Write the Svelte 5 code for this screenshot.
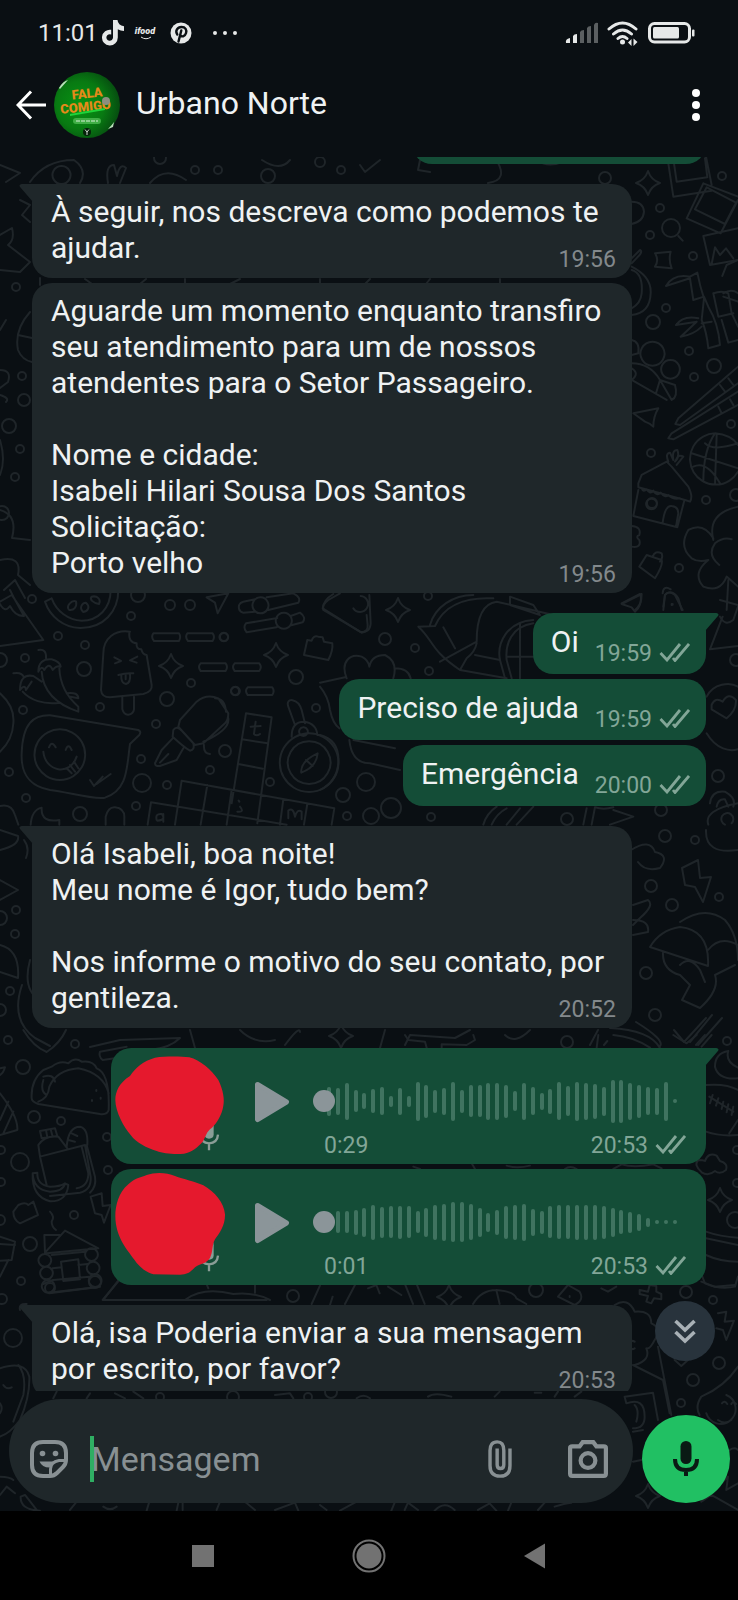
<script lang="ts">

type Message = {
    kind: 'text' | 'voice'
    out: boolean
    tail?: boolean
    text?: string
    time: string
    length?: string
    bars?: number[]
    cover?: string
}

let draft = $state('')

const groups: Message[][] = [
    [
        { kind: 'text', out: false, tail: true, time: '19:56', text: 'À seguir, nos descreva como podemos te ajudar.' },
        {
            kind: 'text', out: false, time: '19:56',
            text: 'Aguarde um momento enquanto transfiro seu atendimento para um de nossos atendentes para o Setor Passageiro.\n\nNome e cidade:\nIsabeli Hilari Sousa Dos Santos\nSolicitação:\nPorto velho'
        }
    ],
    [
        { kind: 'text', out: true, tail: true, time: '19:59', text: 'Oi' },
        { kind: 'text', out: true, time: '19:59', text: 'Preciso de ajuda' },
        { kind: 'text', out: true, time: '20:00', text: 'Emergência' }
    ],
    [
        {
            kind: 'text', out: false, tail: true, time: '20:52',
            text: 'Olá Isabeli, boa noite!\nMeu nome é Igor, tudo bem?\n\nNos informe o motivo do seu contato, por gentileza.'
        }
    ],
    [
        {
            kind: 'voice', out: true, tail: true, time: '20:53', length: '0:29',
            bars: [29, 27, 37, 22, 16, 24, 28, 11, 27, 11, 39, 33, 23, 27, 39, 23, 32, 32, 37, 37, 33, 20, 37, 28, 17, 25, 38, 30, 39, 37, 35, 29, 43, 43, 37, 33, 28, 27, 39, 4],
            cover: 'M46 195C46 170 58 143 90 123C106 98 130 78 165 68C195 64 240 64 268 67C300 75 335 105 355 135C370 165 374 195 370 212C366 240 350 264 336 278C318 290 318 305 308 320C295 335 275 352 252 356C225 359 190 356 170 348C140 338 110 325 92 300C72 278 46 230 46 195Z'
        },
        {
            kind: 'voice', out: true, time: '20:53', length: '0:01',
            bars: [18, 22, 22, 25, 29, 35, 31, 32, 33, 32, 22, 29, 35, 37, 40, 40, 36, 29, 19, 25, 33, 35, 37, 27, 23, 32, 34, 34, 35, 35, 35, 33, 29, 24, 21, 17, 9, 4, 4, 4],
            cover: 'M46 180C46 150 55 110 85 85C105 65 120 66 140 57C165 48 200 49 225 60C250 70 285 76 310 88C345 108 372 140 375 175C376 205 360 230 345 250C335 268 340 285 330 306C318 325 300 322 285 334C270 348 265 355 240 356L160 355C135 348 115 330 102 310C85 285 46 245 46 180Z'
        }
    ],
    [
        { kind: 'text', out: false, tail: true, time: '20:53', text: 'Olá, isa Poderia enviar a sua mensagem por escrito, por favor?' }
    ]
]

const dots = [
    [32, 599, 4], [131, 616, 4], [138, 595, 7], [170, 605, 5], [190, 605, 5], [58, 636, 4], [85, 645, 4], [25, 658, 4], [0, 660, 7],
    [84, 669, 7], [191, 683, 4], [167, 699, 7], [100, 707, 4], [23, 710, 4], [156, 724, 4], [296, 677, 7], [316, 708, 4],
    [225, 751, 6], [141, 759, 4], [142, 783, 9], [167, 785, 4], [210, 770, 4], [9, 772, 4], [26, 798, 4], [80, 814, 7], [136, 806, 4],
    [270, 782, 4], [343, 795, 7], [347, 816, 4], [366, 782, 9], [224, 637, 4], [235, 691, 4],
    [385, 639, 6], [415, 648, 4], [429, 671, 4], [428, 596, 4], [391, 808, 10], [371, 816, 8], [431, 817, 4], [567, 819, 6],
    [661, 810, 6], [718, 776, 6], [736, 660, 6],
    [660, 208, 4], [722, 176, 4], [650, 235, 4], [693, 256, 4], [666, 308, 4], [653, 322, 7], [689, 351, 4], [714, 366, 7], [694, 377, 4],
    [731, 424, 4], [651, 453, 4], [706, 500, 4], [736, 495, 6], [679, 568, 4], [652, 503, 5], [671, 228, 9],
    [16, 287, 4], [22, 376, 4], [24, 400, 6], [9, 426, 7], [20, 449, 4], [15, 477, 4], [2, 513, 7],
    [195, 170, 4], [218, 170, 4], [268, 176, 7], [341, 170, 4], [320, 162, 5], [605, 178, 6], [160, 158, 6],
    [665, 836, 6], [695, 840, 4], [651, 886, 6], [672, 905, 6], [719, 897, 4], [646, 973, 6], [655, 1015, 6], [727, 1041, 4], [567, 1042, 6],
    [16, 910, 4], [15, 934, 4], [10, 991, 4], [8, 1040, 4], [75, 1044, 4], [0, 918, 7], [0, 1010, 6],
    [23, 1067, 7], [34, 1117, 6], [61, 1121, 4], [20, 1162, 9], [107, 1137, 4], [108, 1170, 4], [74, 1215, 4], [30, 1244, 7],
    [21, 1281, 4], [0, 1220, 5], [1, 1150, 4], [1, 1182, 4], [737, 1150, 4], [737, 1183, 4], [735, 1220, 8],
    [13, 1338, 9], [2, 1299, 5], [293, 1296, 6], [160, 1397, 4], [233, 1397, 6], [308, 1397, 4], [331, 1392, 6],
    [686, 1292, 6], [713, 1300, 4], [719, 1363, 6], [693, 1380, 6], [681, 1403, 4], [536, 1290, 7], [50, 1288, 5], [95, 1282, 6]
]

const sparkles = [
    [171, 666, 12], [276, 655, 12], [398, 610, 12], [648, 183, 12], [720, 1200, 12], [449, 1297, 12], [648, 1496, 12], [341, 1036, 12]
]

// doodles that are drawn at three times their size and scaled down, with the corner where each sheet starts
const sheets = [
    { x: 0, y: 590, d: [
        'M0 35L35 15L130 150L0 168M30 0L40 20L72 78M0 42Q15 70 30 48Q45 78 70 78',
        'M135 35C150 80 190 112 240 114C310 115 355 65 355 0M155 25C170 65 205 90 245 92C295 92 332 55 332 0M135 35L155 25M208 60C195 50 215 30 228 34C232 50 222 62 208 60ZM250 66C235 52 248 38 258 38C272 50 264 64 250 66ZM297 42C278 38 268 28 275 20C292 16 304 28 297 42Z',
        'M460 130H537Q544 141 537 153H462Q452 141 460 130ZM562 130H638Q646 141 638 153H564Q554 141 562 130ZM602 220H677Q685 231 677 243H602Q592 231 602 220ZM704 220H778Q787 231 778 243H704Q694 231 704 220ZM743 292H817Q825 303 817 315H743Q733 303 743 292ZM672 128A13 13 0 1 1 671 128ZM707 290A13 13 0 1 1 706 290Z',
        'M390 125C345 118 310 145 310 190L303 300Q305 322 330 322L430 312Q458 305 455 285L440 195Q428 195 424 178Q408 178 410 160Q385 158 388 127M367 322V358Q372 375 385 374Q400 372 402 358V320M343 202L363 213L345 220M412 200L390 211L410 218M355 255Q378 248 400 250M364 254Q362 280 378 282Q393 278 390 252M377 252V268',
        'M620 22L685 10M620 22L645 38L653 70L684 12M718 60Q712 40 730 35L765 28M800 22L880 10Q905 22 895 38L805 60M765 65L730 68Q720 66 718 58M782 22A24 24 0 1 1 781 22ZM832 84L738 100Q728 112 740 127L830 112M872 78L900 68Q920 82 908 97L874 106M852 68A24 24 0 1 1 851 68Z',
        'M912 195L922 150L935 152Q940 135 955 140L968 142L972 155L997 160Q1000 180 985 210Z',
        'M970 60Q965 45 985 30L1020 10M970 60L1085 128Q1105 125 1103 105L1100 75',
        'M115 180Q140 175 138 205M115 245Q115 205 155 208Q180 215 182 230M115 245Q125 225 133 240Q148 215 158 240Q170 225 182 230M178 235C180 280 200 320 235 350V365C190 350 130 320 125 245M40 250Q65 245 72 262M60 300Q60 250 100 258L125 275M60 300Q75 280 78 300L95 275M68 305C90 330 130 345 180 338M200 310Q235 305 235 325L212 320',
        'M65 490C68 400 100 375 150 376L415 420Q425 425 418 435L390 462C380 530 385 600 315 623C280 630 200 605 150 600C95 590 62 560 65 490ZM180 418A76 76 0 1 1 179 418ZM147 472Q155 450 167 472M197 480Q205 458 215 480M130 485C135 545 210 560 230 500M200 535L215 550M210 525L225 545M222 515L235 535M270 570L282 588L308 560M290 582L332 552',
        'M0 310Q45 350 40 400Q38 450 0 485',
        'M540 390L590 335Q620 310 655 325L685 370Q685 390 675 400L610 460L585 465L535 410ZM645 325Q675 325 678 365M685 385Q690 420 610 455M520 420Q530 405 545 422L580 460Q585 480 570 482Q550 470 518 440ZM518 445L485 480L465 520Q465 530 480 528L530 510L550 475M480 518L505 492M612 465Q610 490 630 492',
        'M738 370L815 382L772 700M738 370L695 640M726 448L803 460M715 522L788 536M545 572L1003 655L995 704M545 572L525 704M453 637L860 704M453 637L443 704M622 585L602 704M695 600L680 704M850 628L840 704M922 642L912 704M752 410L782 408M767 395L762 432Q770 440 780 432M718 635L716 632M720 650Q735 668 712 665M470 690Q465 670 485 672Q500 690 472 692M490 672V695M865 685V662Q880 650 885 680Q892 655 905 665V688',
        'M865 350C855 320 895 325 905 360L915 400M865 350L885 405M875 440Q875 395 912 395Q950 400 952 435M928 430A88 88 0 1 1 927 430ZM928 454A64 64 0 1 1 927 454ZM953 490Q950 530 904 548Q900 515 953 490ZM918 510L938 528M911 412A13 13 0 1 1 910 412Z',
        'M0 648Q35 640 45 675L55 704M92 704Q95 660 125 653Q122 700 178 690V704M317 704V680Q325 650 345 652Q375 655 373 685V704'
    ] },
    { x: 320, y: 590, d: [
        'M8 55Q10 30 40 12M8 55L120 125Q150 130 152 100L148 15M122 18A24 24 0 1 1 100 55',
        'M295 110C340 150 330 180 420 240L440 205Q465 185 470 160M295 110L345 108C370 50 430 20 520 25M330 105C345 50 400 15 460 15M370 112L405 175M360 215L470 155C470 80 490 40 530 35L700 75M420 240L560 265M465 195L540 210M570 20L640 45L660 75L570 45Z',
        'M640 90C560 95 530 160 540 210L555 265M640 100C575 110 555 160 560 210L575 265M560 200H640M600 100V265',
        'M80 265C60 215 90 190 125 200Q145 210 148 230Q155 195 195 195Q235 215 220 265M225 235Q265 235 272 265M0 278L75 262M0 290Q25 320 30 360Q38 400 58 415M88 450Q95 520 150 520L240 540M100 450L225 475M0 435Q60 450 55 520Q50 575 0 600',
        'M905 42L965 12Q965 50 945 65L935 52L905 42ZM1030 50L1035 15Q1045 0 1065 15L1088 60M1058 42V44M1208 80L1170 178L1254 168M1200 80Q1215 110 1240 90L1254 50M1200 30L1254 45',
        'M1160 320C1180 280 1230 275 1254 290M1160 430C1190 480 1230 485 1254 478M1175 345Q1185 320 1208 335Q1225 305 1248 330Q1250 360 1220 385L1175 358Z',
        'M490 704Q500 670 530 650M515 704Q530 670 560 655M560 704L600 655M590 704L640 650M790 704Q795 680 800 655M815 704L825 652Q850 660 880 652M870 704L940 680L880 660M1170 640Q1175 600 1215 605Q1250 625 1240 650M1190 650Q1195 625 1215 628L1225 650M1165 704Q1150 660 1254 640M1215 704A18 18 0 1 1 1235 700'
    ] },
    { x: 600, y: 150, d: [
        'M205 40L220 140L335 122M222 40L230 95L322 82L315 25M318 20L335 105M310 100L260 205L362 250L414 150M320 112L285 178L375 222L408 158L320 112M310 100L414 140M310 258L330 345L414 330M310 258L414 235M335 342L345 292L360 315L378 295L400 325',
        'M95 155Q130 155 132 185Q130 215 95 222M95 325L120 300Q130 305 112 322L95 340M95 360Q130 370 125 430Q122 460 95 475M95 350Q155 380 152 430Q150 490 95 495M235 258L248 272M165 310L212 305Q205 330 215 355L165 350Q178 330 165 310ZM367 378L380 345L414 330',
        'M198 408Q220 370 270 380L292 368Q300 410 312 445L305 510Q320 545 325 595L360 585Q355 520 325 470L312 440M198 408L270 385L280 450L312 440M228 525Q250 495 295 505M228 525L290 515M242 560L290 515M242 560Q280 555 305 530M305 520L335 515M340 430Q365 420 385 430L395 490L414 530M340 430L355 500L400 490M365 510L385 578L414 570M370 430Q395 415 414 430M370 440L414 455',
        'M95 570Q120 575 115 610L95 615M158 575A36 36 0 1 1 157 575ZM212 630A28 28 0 1 1 211 630ZM95 640Q150 640 180 690L215 750Q235 740 225 705L180 690M95 690L200 750M95 655Q120 670 95 690M180 690L168 730',
        'M100 790L175 775Q160 800 160 830Q150 820 135 815ZM226 822L240 825L414 700M226 822L235 805L414 650M205 865L220 868L414 765M205 865L215 850L414 725M360 705L375 725M385 685L400 705M355 770L365 790M390 748L400 765',
        'M345 850A77 77 0 1 0 414 965M345 850Q395 855 414 885M275 910L414 955M310 995Q310 900 345 850M315 880Q340 905 414 880M280 950Q320 930 360 1000M350 855L345 1002',
        'M115 1000L125 975L200 935L215 950L265 1010Q280 1040 270 1055L255 1050L115 1012ZM115 1020L100 1098L232 1132L252 1055M125 1015Q130 1028 140 1018Q150 1035 160 1022Q170 1040 182 1028Q195 1045 205 1035Q220 1050 240 1045M155 1046A16 16 0 1 1 154 1046ZM188 1118Q195 1065 215 1068Q235 1070 235 1090L228 1130M205 935Q195 910 210 908L220 930Q215 900 232 900Q240 920 225 935Q235 910 250 920L230 945',
        'M95 1128Q125 1130 118 1155Q105 1160 118 1170Q125 1195 95 1190M340 1170Q320 1090 414 1070M340 1165Q310 1115 265 1140Q235 1190 275 1225Q295 1238 325 1230M325 1230Q275 1270 310 1310Q360 1330 380 1280L414 1310M358 1245Q320 1215 345 1180Q370 1160 395 1168M118 1250L140 1215L185 1230Q190 1245 165 1285ZM158 1220Q165 1200 185 1210Q190 1225 180 1235M65 1360L120 1332Q130 1360 105 1380M190 1380L195 1335Q215 1315 235 1345L245 1380M188 1330Q190 1305 212 1318M215 1362V1365M385 1290L380 1380'
    ] },
    { x: 0, y: 1030, d: [
        'M70 0Q100 50 140 66Q180 40 198 0M300 65L380 50M300 65Q295 80 308 90L390 78',
        'M95 205Q92 150 130 120L155 110Q180 90 205 100Q225 80 245 95Q280 90 290 115Q330 130 326 240Q322 255 300 252L115 222Q95 215 95 205ZM115 215Q145 205 148 170Q170 120 235 115Q310 130 326 190M130 140Q160 130 165 155M130 150Q120 185 140 195M289 180V183M276 210V213M302 203V206M0 115L15 112Q10 130 0 135M0 190Q55 260 52 300L0 315M0 270L25 215M10 310L40 245',
        'M120 380L115 345Q135 315 175 320L202 355M120 380L255 345L272 440Q275 480 240 488L150 498M120 380L140 465M245 350L265 430Q265 470 230 475M260 345L285 440Q290 470 270 488M125 325L120 303L165 295L172 318ZM138 300L142 322M152 298L158 320M200 350Q205 290 240 290Q265 295 262 345M215 310L232 318M205 330L225 335M98 430Q100 480 150 485Q190 485 195 460L205 465Q200 515 150 514Q95 500 98 430ZM98 430L112 428Q110 465 150 470Q180 470 195 460',
        'M40 545L55 525Q75 515 85 525L100 515L114 555L60 580Q40 570 40 545ZM150 545Q165 560 155 575Q155 590 168 600M272 500L305 490L308 528L332 525L312 578L305 555L285 550Z',
        'M135 668L133 615L180 615M135 668L195 602L295 655L140 670M135 672A19 19 0 1 1 134 672ZM140 710A19 19 0 1 1 139 710ZM145 750A19 19 0 1 1 144 750ZM275 655A19 19 0 1 1 274 655ZM280 695A19 19 0 1 1 279 695ZM286 733A19 19 0 1 1 285 733ZM155 675L255 665M158 715L185 712M235 705L262 702M160 750L268 740M148 790L290 772M183 695L235 688L240 748L190 753ZM0 620L45 635L35 690L0 692M0 642L45 645M25 690L0 740M310 810L360 745M310 810H390M60 840Q55 820 80 822'
    ] },
    { x: 400, y: 1035, d: [
        'M15 0L25 15L75 20L80 38M125 38V28L200 30L225 15L220 0M590 38L595 0M612 30L622 18M640 0Q700 5 750 38M820 0L860 25L890 0M888 30L915 0M905 35L935 0',
        'M985 48Q945 55 945 95Q955 135 1014 130M985 48Q975 80 1014 98M918 150Q980 145 1014 165M918 290Q960 305 1014 300M988 295L1014 255M928 185L1000 230M938 180L930 205M955 190L948 212M970 200L965 222M985 208L980 232M1000 215L995 240',
        'M905 412Q880 390 895 375Q910 375 915 378Q925 350 950 362L960 378Q985 385 978 405Q960 420 945 408Q925 425 905 412ZM918 590Q960 605 1014 608M918 610L1014 630M918 660Q960 680 1014 680M905 720L915 745Q960 765 1005 755L1014 725M40 395L60 402M215 385L225 402M320 392Q350 402 390 392M495 402Q510 390 530 402M640 402L665 388Q700 400 760 388L785 400'
    ] },
    { x: 0, y: 1280, d: [
        'M145 38L300 20M130 12L160 0M308 60H800M308 60L358 0M558 58Q610 20 700 42Q760 35 810 60M615 0L625 25M765 0V38M935 72L960 17M990 75L998 50M1035 72L1065 15M0 265Q75 240 88 290Q90 350 60 420Q30 460 0 470M55 255Q80 285 70 345L40 425M10 315Q20 330 35 322M0 370Q10 385 0 400M0 590Q30 590 40 600M0 645L20 620L45 640M62 650Q60 690 120 692M62 650L75 645L110 690M210 690L230 665M310 680Q330 695 350 680M440 692L448 665M530 692L535 668M548 690V665M650 690L660 665M735 665L765 690M825 690L885 668L895 692M960 675L980 690M1020 692L1070 665M825 345L870 340L880 355M160 355L170 335M260 355L270 340M345 340L375 355M400 335L430 355M1070 355Q1090 340 1110 355'
    ] },
    { x: 368, y: 1280, d: [
        'M0 25L25 15L35 40M60 20L100 45M110 10L135 72M145 10L170 72M315 72Q340 30 385 30L395 72M385 30Q440 35 445 55L475 72M570 50L600 15L635 35Q650 60 620 75ZM605 48V51M700 25L720 35L745 20M815 30L840 35L845 15L865 18L865 35L880 42L880 58L858 55L850 70L835 65L840 48L815 42Z',
        'M740 75Q780 50 800 95Q850 90 850 130Q885 145 860 180Q845 210 835 205Q850 240 800 255M800 205A12 12 0 1 1 800 185M795 255L885 300L905 400M870 200L910 405M770 350L855 338L870 420M770 350L775 370Q830 350 830 410Q830 445 795 445M800 375Q815 390 805 425M795 545L820 540M795 455L825 450M1050 100L1075 95L1070 125L1098 122L1075 180L1065 150L1045 145M1000 5L1040 20L1100 15M1110 260Q1070 320 1000 350Q980 380 995 405M1075 345A45 45 0 1 1 1015 400M1062 370Q1070 360 1078 372M1090 372Q1096 362 1104 372M1050 420Q1070 435 1090 420M1060 610L1080 590L1075 630L1110 610M1000 665L1030 645L1110 690M1085 510Q1100 500 1110 510M920 240L940 258L960 240M180 350Q200 335 250 350M380 350L395 335M500 338H520M560 350L570 335M620 350L640 335M70 692L80 668M110 690L120 668L150 690M200 692Q230 660 260 690M330 690L365 670L385 692M420 692L430 668M510 690L530 668M560 680Q590 670 610 668'
    ] }
]

// narrow strips on both sides and between the bubbles, in page units
const strips = 'M0 165L20 173L6 182M30 182Q45 160 74 160Q88 170 80 183M62 166A9 9 0 1 1 61 166ZM108 183Q105 165 114 165L117 176Q120 162 126 168L120 183M150 183Q165 165 186 180M262 160Q280 172 290 160M360 165L365 172L380 160M420 160L418 170L430 172M495 158Q510 180 488 183M536 160Q548 168 562 162M20 200L30 205L22 215L30 222M0 235L12 228Q15 240 8 245L30 262L20 272L0 270M0 330L6 320M30 312Q14 330 18 350Q22 360 32 362M18 335L32 338M0 370Q12 370 8 382L0 388M0 395Q10 398 6 402M0 440Q6 460 0 475M0 510Q18 515 12 538L30 540M0 560Q22 555 18 575L30 585M4 590L15 580L25 598M40 278V285M85 279L92 284M140 284L146 279M185 279V284M230 284L240 279M320 279V284M365 284L370 279M430 279L426 284M500 279V284M0 830L18 836Q20 845 0 850M24 840Q30 848 26 858M0 880L18 890L0 900M0 945Q20 950 18 978L0 972M30 960Q22 990 40 1000M22 985Q10 1020 35 1038L50 1046M631 850Q650 838 655 852Q670 855 660 868Q645 872 638 862M682 868L698 860L700 878L711 877L703 902L695 887L685 885ZM633 905L648 900Q655 905 640 918L633 925M633 920Q650 920 648 932L633 935M650 947Q660 930 680 927Q710 930 708 966L650 947ZM680 922Q705 905 725 920Q738 935 738 960M708 950Q720 935 738 945M663 952Q662 970 680 975L690 985L682 1000L700 1008Q720 990 715 975L735 965M680 965Q690 955 700 970L705 982M706 830Q705 855 738 850M610 1028Q650 1030 660 1048M636 1022Q665 1040 660 1046M674 1030L684 1042L706 1018M690 1042L712 1015M698 1045L722 1018M90 1047L120 1040L180 1038Q170 1048 150 1050M190 1030L195 1048M240 1030Q255 1045 275 1040M285 1045Q300 1025 300 1032M380 1048L385 1030M405 1045L410 1035L455 1038L470 1030M505 1035Q515 1045 530 1030M590 1045L598 1030'

function sparkle([x, y, r]: number[]) {
    const q = r / 4
    return `M${x} ${y - r}Q${x + q} ${y - q} ${x + r} ${y}Q${x + q} ${y + q} ${x} ${y + r}Q${x - q} ${y + q} ${x - r} ${y}Q${x - q} ${y - q} ${x} ${y - r}Z`
}

</script>

{#snippet tail(out)}
    <svg class="tail" class:right={out} viewBox="0 0 14 18" aria-hidden="true">
        <path d={out ? 'M0 0H11.500Q15 .8 12.500 3.500L0 18Z' : 'M14 0H2.500Q-1 .8 1.500 3.500L14 18Z'} />
    </svg>
{/snippet}

{#snippet stamp(time, out)}
    <span class="stamp">
        <time>{time}</time>
        {#if out}
            <svg class="checks" viewBox="0 0 31 20" role="img" aria-label="Entregue">
                <path d="M1.500 11L8 18L21 2M14 16L16 18.500L30 2" />
            </svg>
        {/if}
    </span>
{/snippet}

<div class="phone">
    <div class="status">
        <span class="clock">11:01</span>
        <svg class="tiktok" viewBox="0 0 22 26" aria-hidden="true">
            <path d="M11 0H15.500Q16 5.500 22 6.200V11Q18.500 11 15.800 9.200V17.500A7.900 7.900 0 1 1 9.200 9.800V14.600A3.300 3.300 0 1 0 11 17.500Z" />
        </svg>
        <span class="ifood">
            ifood
            <svg viewBox="0 0 12 4" aria-hidden="true"><path d="M1 1Q6 4.500 11 1" /></svg>
        </span>
        <svg class="pinterest" viewBox="0 0 22 22" aria-hidden="true">
            <circle cx="11" cy="11" r="10.500" />
            <path d="M8.500 19.500L11.300 8.500M7.300 12.500C4.800 9 7.500 5 11.500 5C15.500 5 17 8 16 11.200C15 14.500 11.500 15.500 10.200 12.800" />
        </svg>
        <svg class="more" viewBox="0 0 26 6" aria-hidden="true">
            <circle cx="3" cy="3" r="2" /><circle cx="13" cy="3" r="2" /><circle cx="23" cy="3" r="2" />
        </svg>
        <span class="space"></span>
        <svg class="signal" viewBox="0 0 34 22" aria-hidden="true">
            <path class="on" d="M1 21Q0 17 5 16V21ZM8 21V14Q9 12 12 12V21Z" />
            <path class="off" d="M15 21V10Q16 8 19 8V21ZM22 21V6Q23 4 26 4V21ZM29 21V3Q30 0 33 1V21Z" />
        </svg>
        <svg class="wifi" viewBox="0 0 32 25" aria-hidden="true">
            <path class="arc" d="M2 8Q15.500 -4 29 8M6.500 13Q15.500 5 24.500 13M11 17.500Q15.500 13.500 20 17.500" />
            <circle cx="15.500" cy="21" r="2.500" />
            <path d="M24.500 18V25L21 21.500ZM26.500 25V17.500L30.500 21Z" />
        </svg>
        <svg class="battery" viewBox="0 0 48 22" aria-hidden="true">
            <rect class="case" x="1.500" y="1.500" width="40" height="18.500" rx="5" />
            <rect x="5" y="5" width="26" height="11.500" rx="1.500" />
            <rect x="44" y="7.500" width="2.500" height="7" rx="1" />
        </svg>
    </div>

    <header>
        <button class="back" aria-label="Voltar">
            <svg viewBox="0 0 30 30"><path d="M15 1.500L2 15L15 28.500M2 15H30" /></svg>
        </button>
        <svg class="avatar" viewBox="0 0 66 66" role="img" aria-label="Foto do contato">
            <defs>
                <radialGradient id="glow" cx=".4" cy=".5" r=".6">
                    <stop offset="0" stop-color="#079313" />
                    <stop offset=".6" stop-color="#087a12" />
                    <stop offset="1" stop-color="#064d10" />
                </radialGradient>
            </defs>
            <circle cx="33" cy="33" r="33" fill="url(#glow)" />
            <path d="M5 16Q9 9 14 8L6 17ZM54 57Q58 53 60 50L59 55Z" fill="#b9dfba" />
            <g class="slogan" transform="rotate(-6 33 30)">
                <text x="34" y="26" font-size="13">FALA</text>
                <text x="31" y="39" font-size="13">COMIGO</text>
            </g>
            <path d="M16 42L51 36V38L16 44Z" fill="#1fd33a" />
            <circle cx="52" cy="29" r="4" fill="#8c8f80" />
            <rect x="19" y="46" width="28" height="6" rx="3" fill="#3fae45" />
            <path d="M22 49H44" stroke="#d8efd8" stroke-dasharray="4 1" />
            <circle cx="33" cy="60" r="4" fill="#06210a" />
            <path d="M31 57.500L33 60L35 57.500M33 60V63" stroke="#d0d8d0" fill="none" />
        </svg>
        <h1>Urbano Norte</h1>
        <button class="menu" aria-label="Mais opções">
            <svg viewBox="0 0 8 32"><circle cx="4" cy="4" r="4" /><circle cx="4" cy="16" r="4" /><circle cx="4" cy="28" r="4" /></svg>
        </button>
    </header>

    <div class="room">
        <svg class="wallpaper" viewBox="0 157 738 1354" preserveAspectRatio="xMinYMin slice" aria-hidden="true">
            {#each dots as [cx, cy, r]}
                <circle {cx} {cy} {r} />
            {/each}
            {#each sparkles as s}
                <path d={sparkle(s)} />
            {/each}
            {#each sheets as sheet}
                <g transform={`translate(${sheet.x} ${sheet.y}) scale(.3333)`}>
                    {#each sheet.d as d}
                        <path {d} />
                    {/each}
                </g>
            {/each}
            <path d={strips} />
        </svg>

        <main>
            <div class="group">
                <div class="bubble out peek"></div>
            </div>
            {#each groups as group}
                <div class="group">
                    {#each group as m}
                        {#if m.kind === 'voice'}
                            <div class="bubble voice out" class:first={m.tail}>
                                {#if m.tail}{@render tail(true)}{/if}
                                <svg class="cover" viewBox="33 39 360 348" aria-hidden="true">
                                    <path class="mic" d="M314 268Q314 252 327 252Q341 252 341 268V298Q341 311 327 311Q314 311 314 298Z" />
                                    <path class="mic-stand" d="M301 299Q303 324 327 325Q352 324 354 299M327 325V346" />
                                    <path class="blob" d={m.cover} />
                                </svg>
                                <button class="play" aria-label="Reproduzir mensagem de voz">
                                    <svg viewBox="0 0 36 42"><path d="M3.500 3.500L32.500 21L3.500 38.500Z" /></svg>
                                </button>
                                <div class="player">
                                    <div class="wave">
                                        <span class="knob"></span>
                                        {#each m.bars as bar}
                                            <i style={`height: ${bar}px`}></i>
                                        {/each}
                                    </div>
                                    <div class="info">
                                        <span>{m.length}</span>
                                        {@render stamp(m.time, true)}
                                    </div>
                                </div>
                            </div>
                        {:else}
                            <div class="bubble text" class:out={m.out} class:first={m.tail}>
                                {#if m.tail}{@render tail(m.out)}{/if}
                                <p>{m.text}{@render stamp(m.time, m.out)}</p>
                            </div>
                        {/if}
                    {/each}
                </div>
            {/each}
        </main>

        <form class="composer" onsubmit={(e) => e.preventDefault()}>
            <button type="button" class="down" aria-label="Ir para o fim">
                <svg viewBox="0 0 24 26"><path d="M2.500 3L12 12L21.500 3M2.500 14L12 23L21.500 14" /></svg>
            </button>
            <div class="pill">
                <button type="button" class="sticker" aria-label="Figurinhas">
                    <svg viewBox="0 0 38 38">
                        <path d="M13 2H25Q36 2 36 13V20Q36 24 33 27L27 33Q24 36 20 36H13Q2 36 2 25V13Q2 2 13 2Z" />
                        <path class="fold" d="M36 20.500H29Q20.500 22 20.500 29V36" />
                        <path class="fill" d="M9.500 21.500H28Q22 23 19.500 27.500Q12 27.500 9.500 21.500Z" />
                        <circle class="fill" cx="12.500" cy="13.500" r="2.800" /><circle class="fill" cx="25.500" cy="13.500" r="2.800" />
                    </svg>
                </button>
                <label class="field">
                    <span class="cursor"></span>
                    <input type="text" placeholder="Mensagem" aria-label="Mensagem" bind:value={draft}>
                </label>
                <button type="button" class="attach" aria-label="Anexar">
                    <svg viewBox="0 0 26 40"><path d="M23.500 9V27Q23.500 38 13 38Q2.500 38 2.500 27V11Q2.500 2 10 2Q17 2 17 11V26Q17 30 13.500 30Q10 30 10 26V9" /></svg>
                </button>
                <button type="button" class="photo" aria-label="Câmera">
                    <svg viewBox="0 0 38 36">
                        <path d="M2 7.500Q2 6 4 6H11L14 2H24L27 6H34Q36 6 36 7.500V32Q36 34 34 34H4Q2 34 2 32Z" />
                        <circle cx="19" cy="19.500" r="7" />
                    </svg>
                </button>
            </div>
            <button type="button" class="record" aria-label="Gravar mensagem de voz">
                <svg viewBox="0 0 26 36">
                    <rect x="7.500" y="0" width="11" height="23" rx="5.500" />
                    <path d="M2 18Q2 29 13 29Q24 29 24 18M13 29V35" />
                </svg>
            </button>
        </form>
    </div>

    <nav>
        <button aria-label="Recentes"><svg viewBox="0 0 34 34"><rect x="6" y="6" width="22" height="22" /></svg></button>
        <button aria-label="Início">
            <svg viewBox="0 0 34 34"><circle cx="17" cy="17" r="12.500" /><circle class="ring" cx="17" cy="17" r="15.500" /></svg>
        </button>
        <button aria-label="Voltar"><svg viewBox="0 0 34 34"><path d="M6 17L27 4.500V29.500Z" /></svg></button>
    </nav>
</div>

<style>
:global(body) {
    margin: 0;
    background: #0a0f13;
}

.phone {
    height: 100vh;
    display: flex;
    flex-direction: column;
    overflow: hidden;
    background: #0a0f13;
    color: #eff2f3;
    font-family: Roboto, sans-serif;
}

svg {
    display: block;
    flex-shrink: 0;
    fill: currentColor;
}

button {
    flex-shrink: 0;
    display: grid;
    place-content: center;
    padding: 0;
    border: 0;
    background: none;
    color: inherit;
    cursor: pointer;
}

.status {
    display: flex;
    align-items: center;
    height: 40px;
    padding: 13px 42px 0 38px;
    color: #e6e8e8;
}

.clock {
    font-size: 24px;
    line-height: 28px;
}

.tiktok {
    width: 22px;
    height: 26px;
    margin-left: 4px;
}

.ifood {
    width: 24px;
    margin: 0 11px;
    font-size: 9px;
    line-height: 10px;
    font-weight: 900;
    font-style: italic;
}

.ifood svg {
    width: 12px;
    height: 4px;
    margin-left: 5px;
    fill: none;
    stroke: currentColor;
}

.pinterest {
    width: 22px;
    height: 22px;
}

.pinterest path {
    fill: none;
    stroke: #0a0f13;
    stroke-width: 2.4;
    stroke-linecap: round;
}

.more {
    width: 26px;
    height: 6px;
    margin-left: 20px;
}

.space {
    flex: 1;
}

.signal {
    width: 34px;
    height: 22px;
}

.off {
    fill: #5b5f61;
}

.wifi {
    width: 32px;
    height: 25px;
    margin: 0 9px 0 8px;
}

.arc {
    fill: none;
    stroke: currentColor;
    stroke-width: 3;
    stroke-linecap: round;
}

.battery {
    width: 48px;
    height: 22px;
}

.case {
    fill: none;
    stroke: currentColor;
    stroke-width: 3;
}

header {
    display: flex;
    align-items: center;
    height: 104px;
    padding: 0 38px 0 16px;
}

.back svg {
    width: 30px;
    height: 30px;
    fill: none;
    stroke: #fff;
    stroke-width: 3;
}

.avatar {
    width: 66px;
    height: 66px;
    margin: 0 16px 0 8px;
}

.slogan {
    fill: #e58a1a;
    font-weight: 900;
    text-anchor: middle;
}

h1 {
    flex: 1;
    margin: 0;
    padding-bottom: 4px;
    font-size: 32px;
    line-height: 40px;
    font-weight: 400;
}

.menu svg {
    width: 8px;
    height: 32px;
    fill: #fff;
}

.room {
    position: relative;
    flex: 1;
    min-height: 0;
    display: flex;
    flex-direction: column;
}

.wallpaper {
    position: absolute;
    inset: 0;
    width: 100%;
    height: 100%;
    fill: none;
    stroke: #1f2529;
    stroke-width: 2;
    stroke-linecap: round;
    stroke-linejoin: round;
}

.wallpaper :is(path, circle) {
    vector-effect: non-scaling-stroke;
}

main {
    position: relative;
    flex: 1;
    min-height: 0;
    overflow: hidden;
    display: flex;
    flex-direction: column;
    gap: 20px;
    padding: 0 32px;
}

.group {
    flex-shrink: 0;
    display: flex;
    flex-direction: column;
    align-items: flex-start;
    gap: 5px;
}

.bubble {
    position: relative;
    max-width: 89%;
    border-radius: 20px;
    background: #1f272a;
}

.bubble.out {
    align-self: flex-end;
    background: #144d37;
}

.first {
    border-top-left-radius: 0;
}

.first.out {
    border-radius: 20px 0 20px 20px;
}

.peek {
    width: 294px;
    height: 61px;
    margin-top: -54px;
}

.tail {
    position: absolute;
    top: 0;
    left: -13px;
    width: 14px;
    height: 18px;
    fill: #1f272a;
}

.tail.right {
    left: auto;
    right: -13px;
    fill: #144d37;
}

.text p {
    display: flow-root;
    margin: 0;
    padding: 10px 16px 4px 19px;
    font-size: 30px;
    line-height: 36px;
    white-space: pre-line;
}

/* the time sits at the end of the last line */
.text .stamp {
    float: right;
    margin-top: 16px;
}

.text.out p {
    display: flex;
    align-items: flex-end;
    gap: 16px;
    padding: 11px 16px 6px 18px;
}

.text.out .stamp {
    float: none;
    margin-top: 16px;
}

.text.out p {
    align-items: flex-start;
}

.stamp {
    display: flex;
    align-items: center;
    gap: 7px;
    color: #83898c;
    font-size: 23px;
    line-height: 28px;
}

.out .stamp,
.info {
    color: #82a697;
}

.checks {
    width: 31px;
    height: 20px;
    margin-bottom: 4px;
    fill: none;
    stroke: currentColor;
    stroke-width: 2.8;
}

.voice {
    display: flex;
    width: 595px;
}

.cover {
    width: 120px;
    height: 116px;
    overflow: visible;
}

.mic {
    fill: #8a9d96;
}

.mic-stand {
    fill: none;
    stroke: #8a9d96;
    stroke-width: 7;
}

.blob {
    fill: #e5192d;
}

.play {
    width: 82px;
    height: 108px;
}

.play svg {
    width: 36px;
    height: 42px;
    fill: #8b9599;
    stroke: #8b9599;
    stroke-width: 5;
    stroke-linejoin: round;
}

.player {
    flex: 1;
    display: flex;
    flex-direction: column;
    gap: 9px;
    padding: 31px 20px 4px 0;
}

.wave {
    position: relative;
    display: flex;
    align-items: center;
    justify-content: space-between;
    height: 44px;
    padding: 0 9px 0 14px;
}

.wave i {
    width: 4px;
    border-radius: 2px;
    background: #407360;
}

.knob {
    position: absolute;
    left: 0;
    width: 22px;
    height: 22px;
    border-radius: 50%;
    background: #8b9599;
}

.info {
    display: flex;
    justify-content: space-between;
    padding-left: 11px;
    font-size: 23px;
    line-height: 28px;
}

.composer {
    position: relative;
    display: flex;
    align-items: flex-end;
    gap: 9px;
    padding: 8px 8px 8px 9px;
}

.down {
    position: absolute;
    right: 23px;
    bottom: 150px;
    width: 60px;
    height: 60px;
    border-radius: 50%;
    background: #28333c;
    color: #a9b1b6;
}

.down svg {
    width: 24px;
    height: 26px;
    fill: none;
    stroke: currentColor;
    stroke-width: 3.6;
}

.pill {
    flex: 1;
    min-width: 0;
    display: flex;
    align-items: center;
    box-sizing: border-box;
    height: 104px;
    padding: 16px 25px 0 21px;
    border-radius: 52px;
    background: #1f272a;
    color: #889093;
}

.pill svg {
    height: 38px;
    fill: none;
    stroke: currentColor;
    stroke-width: 4;
}

.pill .fill {
    fill: currentColor;
    stroke: none;
}

.pill .fold {
    stroke-width: 3;
}

.sticker svg {
    width: 38px;
}

.attach svg {
    width: 26px;
    stroke-width: 3.6;
}

.photo {
    margin-left: 55px;
}

.photo svg {
    width: 40px;
}

.field {
    position: relative;
    flex: 1;
    min-width: 0;
    display: flex;
    align-items: center;
    margin: 0 20px 0 22px;
}

.cursor {
    position: absolute;
    left: 0;
    width: 4px;
    height: 46px;
    background: #2fae63;
}

input {
    width: 100%;
    padding: 0 0 0 1px;
    border: 0;
    outline: 0;
    background: none;
    color: #eff2f3;
    font-family: inherit;
    font-size: 34px;
    line-height: 46px;
}

input::placeholder {
    color: #889093;
    opacity: 1;
}

.record {
    width: 88px;
    height: 88px;
    border-radius: 50%;
    background: #21c063;
    color: #0a1a14;
}

.record svg {
    width: 26px;
    height: 36px;
}

.record path {
    fill: none;
    stroke: currentColor;
    stroke-width: 4;
}

nav {
    display: flex;
    justify-content: center;
    align-items: center;
    gap: 106px;
    height: 89px;
    background: #000;
    color: #727272;
}

nav button {
    width: 60px;
    height: 60px;
}

nav svg {
    width: 34px;
    height: 34px;
}

.ring {
    fill: none;
    stroke: currentColor;
    stroke-width: 2;
}
</style>
